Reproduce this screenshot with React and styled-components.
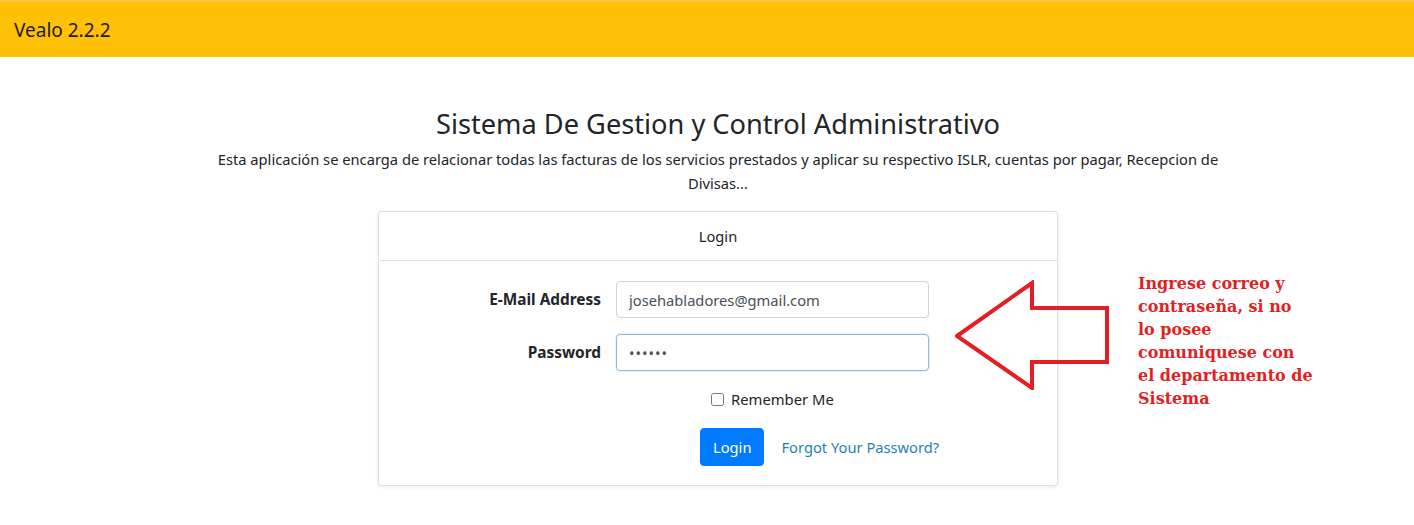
import React from 'react'
import styled, { createGlobalStyle } from 'styled-components'

const GlobalStyle = createGlobalStyle`
  html, body {
    margin: 0;
    padding: 0;
    background: #fff;
    font-family: 'Noto Sans', 'Open Sans', sans-serif;
    color: #212529;
  }
`

const Navbar = styled.nav`
  height: 57px;
  background-color: #ffc107;
  border-top: 2px solid #f4c84a;
  box-sizing: border-box;
  display: flex;
  align-items: center;
  padding: 0 14px;
  font-size: 19px;
  color: #1b1b1b;
`

const Main = styled.main`
  position: relative;
  padding: 50px 0 40px 22px;
  display: flex;
  flex-direction: column;
  align-items: center;
`

const Title = styled.h1`
  margin: 0;
  font-size: 27.2px;
  font-weight: 400;
  line-height: 34px;
  color: #212529;
`

const Lead = styled.p`
  margin: 6px 0 16px;
  width: 1020px;
  text-align: center;
  font-size: 14.7px;
  line-height: 24px;
  color: #212529;
`

const Card = styled.div`
  width: 680px;
  box-sizing: border-box;
  border: 1px solid rgba(0, 0, 0, 0.125);
  border-radius: 4px;
  box-shadow: 0 1px 4px rgba(0, 0, 0, 0.08);
  background: #fff;
`

const CardHeader = styled.div`
  height: 48px;
  display: flex;
  align-items: center;
  justify-content: center;
  border-bottom: 1px solid rgba(0, 0, 0, 0.125);
  font-size: 14.7px;
  color: #212529;
`

const CardBody = styled.div`
  padding: 20px 20px 20px;
`

const FormRow = styled.div`
  display: grid;
  grid-template-columns: 202px 313px;
  column-gap: 15px;
  align-items: center;
  margin-bottom: ${p => p.$mb ?? 16}px;
`

const Label = styled.label`
  text-align: right;
  font-size: 15.4px;
  font-weight: 700;
  color: #212529;
`

const Input = styled.input`
  height: 37px;
  box-sizing: border-box;
  border: 1px solid ${p => (p.$focus ? '#8fb8dd' : '#ced4da')};
  border-radius: 4px;
  padding: 0 12px;
  font-family: inherit;
  font-size: 14.7px;
  color: #495057;
  outline: none;
  box-shadow: ${p => (p.$focus ? '0 0 0 1px rgba(143, 184, 221, 0.2)' : 'none')};
  ${p => p.$password && 'letter-spacing: 1px;'}
`

const Offset = styled.div`
  grid-column: 2;
  display: flex;
  align-items: center;
  white-space: nowrap;
  padding-left: ${p => p.$pl}px;
`

const CheckLabel = styled.label`
  display: flex;
  align-items: center;
  gap: 7px;
  font-size: 14.8px;
  color: #212529;

  input {
    margin: 0;
    width: 13px;
    height: 13px;
  }
`

const Button = styled.button`
  flex: none;
  height: 38px;
  padding: 0 12px;
  border: 1px solid #007bff;
  border-radius: 4px;
  background: #007bff;
  color: #fff;
  font-family: inherit;
  font-size: 14.7px;
`

const Link = styled.a`
  margin-left: 17px;
  font-size: 14.7px;
  color: #1f7fb8;
  text-decoration: none;
`

const Note = styled.div`
  position: absolute;
  left: 955px;
  top: 215px;
  display: flex;
  align-items: flex-start;
  gap: 27px;
`

const NoteText = styled.p`
  margin: 0;
  font-family: 'DejaVu Serif', 'Liberation Serif', serif;
  font-weight: 700;
  font-size: 16px;
  line-height: 23px;
  color: #e31e24;
  white-space: nowrap;
`

const Arrow = () => (
  <svg width="156" height="110" viewBox="0 0 156 110" style={{ marginTop: 8 }}>
    <polygon
      points="2,56 77,3 77,28 152,28 152,82 77,82 77,108"
      fill="none"
      stroke="#e31e24"
      strokeWidth="4"
    />
  </svg>
)

export default function App() {
  return (
    <>
      <GlobalStyle />
      <Navbar>Vealo 2.2.2</Navbar>
      <Main>
        <Title>Sistema De Gestion y Control Administrativo</Title>
        <Lead>
          Esta aplicación se encarga de relacionar todas las facturas de los servicios prestados y aplicar su
          respectivo ISLR, cuentas por pagar, Recepcion de Divisas...
        </Lead>
        <Card>
          <CardHeader>Login</CardHeader>
          <CardBody>
            <FormRow>
              <Label>E-Mail Address</Label>
              <Input type="email" defaultValue="josehabladores@gmail.com" />
            </FormRow>
            <FormRow $mb={18}>
              <Label>Password</Label>
              <Input type="password" defaultValue="secret" $focus $password />
            </FormRow>
            <FormRow $mb={19}>
              <Offset $pl={95}>
                <CheckLabel>
                  <input type="checkbox" />
                  Remember Me
                </CheckLabel>
              </Offset>
            </FormRow>
            <FormRow $mb={-1}>
              <Offset $pl={84}>
                <Button>Login</Button>
                <Link href="#">Forgot Your Password?</Link>
              </Offset>
            </FormRow>
          </CardBody>
        </Card>
        <Note>
          <Arrow />
          <NoteText>
            Ingrese correo y<br />
            contraseña, si no<br />
            lo posee<br />
            comuniquese con<br />
            el departamento de<br />
            Sistema
          </NoteText>
        </Note>
      </Main>
    </>
  )
}
